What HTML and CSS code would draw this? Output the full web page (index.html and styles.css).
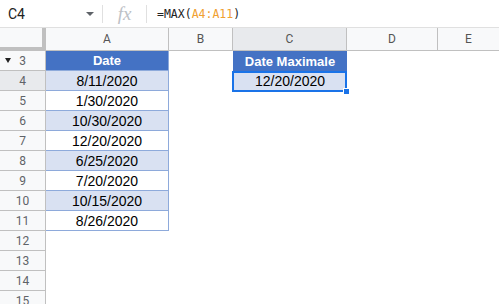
FILE: index.html
```html
<!DOCTYPE html>
<html lang="fr">
<head>
    <meta charset="UTF-8" />
    <title>Date Maximale</title>
    <link rel="stylesheet" href="styles.css">
</head>
<body>
    <div class="formula-bar">
        <div class="name-box">C4</div>
        <div class="name-arrow"></div>
        <div class="sep"></div>
        <div class="fx">fx</div>
        <div class="sep"></div>
        <div class="formula">=MAX(<span class="ref">A4:A11</span>)</div>
    </div>

    <div class="sheet">
        <!-- column headers -->
        <div class="corner"></div>
        <div class="col-head">A</div>
        <div class="col-head">B</div>
        <div class="col-head active">C</div>
        <div class="col-head">D</div>
        <div class="col-head last">E</div>

        <!-- row 3 -->
        <div class="row-head"><span class="toggle"></span>3</div>
        <div class="cell tbl head">Date</div>
        <div class="cell"></div>
        <div class="cell head">Date Maximale</div>
        <div class="cell"></div>
        <div class="cell"></div>

        <!-- row 4 -->
        <div class="row-head active">4</div>
        <div class="cell tbl band">8/11/2020</div>
        <div class="cell"></div>
        <div class="cell band selected">12/20/2020<span class="handle"></span></div>
        <div class="cell"></div>
        <div class="cell"></div>

        <div class="row-head">5</div>
        <div class="cell tbl">1/30/2020</div>
        <div class="cell"></div><div class="cell"></div><div class="cell"></div><div class="cell"></div>

        <div class="row-head">6</div>
        <div class="cell tbl band">10/30/2020</div>
        <div class="cell"></div><div class="cell"></div><div class="cell"></div><div class="cell"></div>

        <div class="row-head">7</div>
        <div class="cell tbl">12/20/2020</div>
        <div class="cell"></div><div class="cell"></div><div class="cell"></div><div class="cell"></div>

        <div class="row-head">8</div>
        <div class="cell tbl band">6/25/2020</div>
        <div class="cell"></div><div class="cell"></div><div class="cell"></div><div class="cell"></div>

        <div class="row-head">9</div>
        <div class="cell tbl">7/20/2020</div>
        <div class="cell"></div><div class="cell"></div><div class="cell"></div><div class="cell"></div>

        <div class="row-head">10</div>
        <div class="cell tbl band">10/15/2020</div>
        <div class="cell"></div><div class="cell"></div><div class="cell"></div><div class="cell"></div>

        <div class="row-head">11</div>
        <div class="cell tbl">8/26/2020</div>
        <div class="cell"></div><div class="cell"></div><div class="cell"></div><div class="cell"></div>

        <div class="row-head">12</div>
        <div class="cell"></div><div class="cell"></div><div class="cell"></div><div class="cell"></div><div class="cell"></div>

        <div class="row-head">13</div>
        <div class="cell"></div><div class="cell"></div><div class="cell"></div><div class="cell"></div><div class="cell"></div>

        <div class="row-head">14</div>
        <div class="cell"></div><div class="cell"></div><div class="cell"></div><div class="cell"></div><div class="cell"></div>

        <div class="row-head">15</div>
        <div class="cell"></div><div class="cell"></div><div class="cell"></div><div class="cell"></div><div class="cell"></div>
    </div>
</body>
</html>
```

FILE: styles.css
```css
* {
    box-sizing: border-box;
}

body {
    margin: 0;
    width: 499px;
    height: 304px;
    overflow: hidden;
    background: #fff;
    font-family: 'Liberation Sans', Arial, sans-serif;
    color: #000;
}

.formula-bar {
    height: 28px;
    display: flex;
    align-items: center;
    border-bottom: 1px solid #e0e0e0;
}

.name-box {
    width: 86px;
    padding-left: 8px;
    font-family: Roboto, 'Liberation Sans', sans-serif;
    font-size: 14px;
    color: #222;
}

.name-arrow {
    width: 0;
    height: 0;
    border-left: 4px solid transparent;
    border-right: 4px solid transparent;
    border-top: 4px solid #5f6368;
    margin-right: 8px;
}

.sep {
    width: 1px;
    height: 18px;
    background: #e0e0e0;
}

.fx {
    width: 43px;
    text-align: center;
    font-family: 'Liberation Serif', serif;
    font-style: italic;
    font-size: 19px;
    color: #bdc1c6;
}

.formula {
    padding-left: 10px;
    font-family: 'DejaVu Sans Mono', monospace;
    font-size: 11.5px;
    color: #222;
}

.formula .ref {
    color: #f0a030;
}

.sheet {
    display: grid;
    grid-template-columns: 46px 123px 64px 114px 91px 1fr;
    grid-template-rows: 23px;
    grid-auto-rows: 20px;
}

.corner {
    background: #f8f9fa;
    border-right: 4px solid #c0c0c0;
    border-bottom: 4px solid #c0c0c0;
}

.col-head {
    background: #f8f9fa;
    border-right: 1px solid #c0c0c0;
    border-bottom: 1px solid #c0c0c0;
    display: flex;
    align-items: center;
    justify-content: center;
    font-family: Roboto, 'Liberation Sans', sans-serif;
    font-size: 12px;
    color: #555;
}

.col-head.active {
    background: #e8eaed;
}

.col-head.last {
    border-right: none;
}

.row-head {
    position: relative;
    background: #f8f9fa;
    border-right: 1px solid #c0c0c0;
    border-bottom: 1px solid #c0c0c0;
    display: flex;
    align-items: center;
    justify-content: center;
    font-family: Roboto, 'Liberation Sans', sans-serif;
    font-size: 12px;
    color: #5f6368;
}

.row-head.active {
    background: #e8eaed;
}

.toggle {
    position: absolute;
    left: 5px;
    top: 7px;
    border-left: 3px solid transparent;
    border-right: 3px solid transparent;
    border-top: 5px solid #222;
}

.cell {
    position: relative;
    display: flex;
    align-items: center;
    justify-content: center;
    font-size: 14px;
}

.cell.tbl {
    border-right: 1px solid #8eaadb;
    border-bottom: 1px solid #8eaadb;
}

.cell.head {
    background: #4472c4;
    color: #fff;
    font-size: 13px;
    font-weight: bold;
}

.cell.band {
    background: #d9e1f2;
}

.cell.selected::before {
    content: "";
    position: absolute;
    left: -1px;
    top: 0;
    right: 0;
    bottom: -1px;
    border: 2px solid #1a73e8;
}

.handle {
    position: absolute;
    right: -3px;
    bottom: -4px;
    width: 7px;
    height: 7px;
    background: #1a73e8;
    border: 1px solid #fff;
}
```
